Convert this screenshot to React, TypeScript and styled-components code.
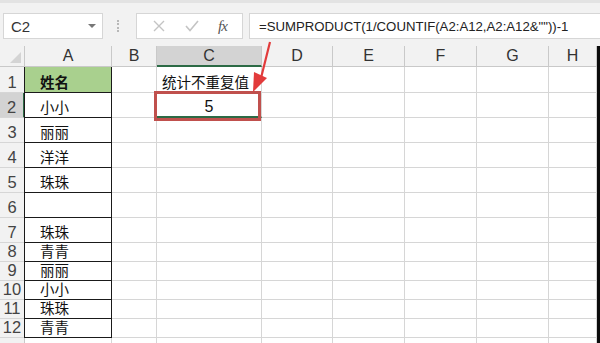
import React from 'react';
import styled, { createGlobalStyle } from 'styled-components';

const GlobalStyle = createGlobalStyle`
  html, body {
    margin: 0;
    padding: 0;
    background: #ffffff;
    overflow: hidden;
  }
  body {
    font-family: "Liberation Sans", "Noto Sans CJK SC", sans-serif;
  }
`;

const COLS = [
  { name: 'A', width: 87 },
  { name: 'B', width: 45 },
  { name: 'C', width: 105 },
  { name: 'D', width: 71 },
  { name: 'E', width: 72 },
  { name: 'F', width: 72 },
  { name: 'G', width: 72 },
  { name: 'H', width: 48 },
];
const ROW_HEADER = 25;
const ROWS = [26, 25, 25, 25, 25, 25, 25, 19, 19, 19, 19, 19, 19];
const names = ['姓名', '小小', '丽丽', '洋洋', '珠珠', '', '珠珠', '青青', '丽丽', '小小', '珠珠', '青青'];

const Window = styled.div`
  position: relative;
  width: 600px;
  height: 343px;
  overflow: hidden;
  background: #ffffff;
  display: flex;
  flex-direction: column;
`;

const Toolbar = styled.div`
  height: 46px;
  flex: none;
  background: #f2f2f2;
  border-top: 3px solid #e3e3e3;
  box-sizing: border-box;
  display: flex;
  align-items: flex-start;
  padding: 10px 0 0 3px;
`;

const NameBox = styled.div`
  width: 100px;
  height: 26px;
  box-sizing: border-box;
  background: #ffffff;
  border: 1px solid #d6d6d6;
  display: flex;
  align-items: center;
  justify-content: space-between;
  padding: 0 6px 0 7px;
  font-size: 15px;
  color: #333;
`;

const DropArrow = styled.span`
  width: 0;
  height: 0;
  border-left: 4px solid transparent;
  border-right: 4px solid transparent;
  border-top: 4px solid #777;
`;

const Grip = styled.div`
  width: 2px;
  height: 12px;
  margin: 7px 15px 0 14px;
  border-left: 2px dotted #b8b8b8;
`;

const ButtonBox = styled.div`
  width: 107px;
  height: 26px;
  box-sizing: border-box;
  background: #ffffff;
  border: 1px solid #d6d6d6;
  display: flex;
  align-items: center;
  justify-content: space-around;
  padding: 0 6px;
`;

const Fx = styled.span`
  font-family: "Liberation Serif", serif;
  font-style: italic;
  font-size: 15px;
  color: #555;
  letter-spacing: -1px;
`;

const FormulaBox = styled.div`
  margin-left: 6px;
  flex: 1;
  height: 26px;
  box-sizing: border-box;
  background: #ffffff;
  border: 1px solid #d6d6d6;
  border-right: none;
  display: flex;
  align-items: center;
  padding-left: 9px;
  font-size: 13.2px;
  color: #222;
  white-space: nowrap;
`;

const Sheet = styled.div`
  display: grid;
  grid-template-columns: ${ROW_HEADER}px ${COLS.map((c) => `${c.width}px`).join(' ')} 3px;
  grid-template-rows: 21px ${ROWS.map((r) => `${r}px`).join(' ')};
  background: #ffffff;
`;

const Corner = styled.div`
  background: #f2f2f2;
  border-right: 1px solid #c9c9c9;
  border-bottom: 1px solid #c9c9c9;
  box-sizing: border-box;
  position: relative;
  &::after {
    content: '';
    position: absolute;
    right: 3px;
    bottom: 3px;
    border-left: 11px solid transparent;
    border-bottom: 11px solid #d4d4d4;
  }
`;

const ColHeader = styled.div<{ $active?: boolean }>`
  background: ${(p) => (p.$active ? '#d3d3d3' : '#f2f2f2')};
  border-right: 1px solid #c9c9c9;
  border-bottom: ${(p) => (p.$active ? '2px solid #2c6a45' : '1px solid #c9c9c9')};
  box-sizing: border-box;
  display: flex;
  align-items: center;
  justify-content: center;
  font-size: 16px;
  color: #333;
`;

const RowHeader = styled.div<{ $active?: boolean }>`
  background: ${(p) => (p.$active ? '#d3d3d3' : '#f2f2f2')};
  border-right: ${(p) => (p.$active ? '2px solid #2c6a45' : '1px solid #c9c9c9')};
  border-bottom: 1px solid #d6d6d6;
  box-sizing: border-box;
  display: flex;
  align-items: flex-end;
  justify-content: center;
  padding-bottom: 0;
  font-size: 16.5px;
  line-height: 19px;
  color: #444;
`;

const Cell = styled.div<{ $center?: boolean }>`
  border-right: 1px solid #d6d6d6;
  border-bottom: 1px solid #d6d6d6;
  box-sizing: border-box;
  display: flex;
  align-items: flex-end;
  justify-content: ${(p) => (p.$center ? 'center' : 'flex-start')};
  padding: 0 0 1px 5px;
  font-family: "Noto Sans CJK SC", "Liberation Sans", sans-serif;
  font-size: 14.5px;
  line-height: 18px;
  color: #111;
  white-space: nowrap;
`;

const NameCell = styled(Cell)<{ $head?: boolean }>`
  background: ${(p) => (p.$head ? '#a9d08e' : '#ffffff')};
  border: 1px solid #1a1a1a;
  border-top: none;
  margin-left: -1px;
  padding-left: 15px;
  font-weight: ${(p) => (p.$head ? 700 : 400)};
`;

const SelectedCell = styled(Cell)`
  position: relative;
  justify-content: center;
  align-items: center;
  font-family: "Liberation Sans", sans-serif;
  font-size: 16px;
  padding: 5px 0 0 0;
  border-bottom: 2px solid #2c6a45;
  &::before {
    content: '';
    position: absolute;
    left: -3px;
    top: -2px;
    right: 0;
    bottom: -5px;
    border: 3px solid #c0504d;
  }
`;

const Edge = styled.div`
  background: #0c0c0c;
`;

const Arrow = styled.svg`
  position: absolute;
  left: 240px;
  top: 36px;
`;

export default function App() {
  return (
    <Window>
      <GlobalStyle />
      <Toolbar>
        <NameBox>
          C2
          <DropArrow />
        </NameBox>
        <Grip />
        <ButtonBox>
          <svg width="14" height="14" viewBox="0 0 14 14">
            <path d="M2 2 L12 12 M12 2 L2 12" stroke="#c4c4c4" strokeWidth="1.4" fill="none" />
          </svg>
          <svg width="16" height="14" viewBox="0 0 16 14">
            <path d="M2 7 L6 11.5 L14 2" stroke="#c4c4c4" strokeWidth="1.6" fill="none" />
          </svg>
          <Fx>fx</Fx>
        </ButtonBox>
        <FormulaBox>=SUMPRODUCT(1/COUNTIF(A2:A12,A2:A12&""))-1</FormulaBox>
      </Toolbar>
      <Sheet>
        <Corner />
        {COLS.map((c) => (
          <ColHeader key={c.name} $active={c.name === 'C'}>
            {c.name}
          </ColHeader>
        ))}
        <Edge />
        {ROWS.map((_, i) => {
          const row = i + 1;
          return (
            <React.Fragment key={row}>
              <RowHeader $active={row === 2}>{row <= names.length ? row : ''}</RowHeader>
              {COLS.map((c) => {
                if (c.name === 'A') {
                  if (row > names.length) return <Cell key={c.name} />;
                  return (
                    <NameCell key={c.name} $head={row === 1}>
                      {names[i]}
                    </NameCell>
                  );
                }
                if (c.name === 'C' && row === 1) return <Cell key={c.name}>统计不重复值</Cell>;
                if (c.name === 'C' && row === 2) return <SelectedCell key={c.name}>5</SelectedCell>;
                return <Cell key={c.name} />;
              })}
              <Edge />
            </React.Fragment>
          );
        })}
      </Sheet>
      <Arrow width="40" height="60" viewBox="0 0 40 60">
        <path d="M30 6 L21.5 40" stroke="#e23b3b" strokeWidth="2.2" fill="none" />
        <path d="M13 56 L14 36 L27 42 Z" fill="#e23b3b" />
      </Arrow>
    </Window>
  );
}
